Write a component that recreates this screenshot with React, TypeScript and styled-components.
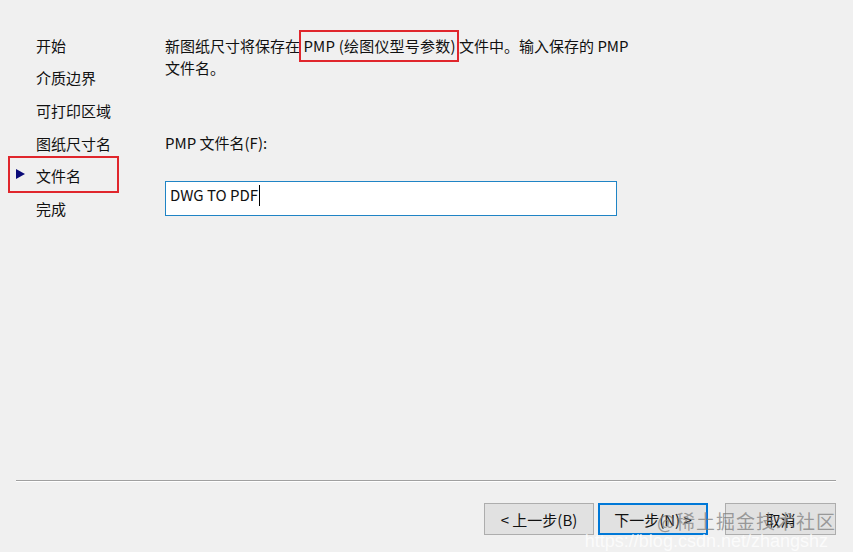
import styled, { createGlobalStyle } from "styled-components";

const GlobalStyle = createGlobalStyle`
  html, body {
    margin: 0;
    padding: 0;
    background: #f0f0f0;
  }
  body {
    font-family: "Noto Sans CJK SC", "Liberation Sans", sans-serif;
    color: #000;
  }
`;

const steps = ["开始", "介质边界", "可打印区域", "图纸尺寸名", "文件名", "完成"];
const activeStep = "文件名";

const App = () => {
  return (
    <>
      <GlobalStyle />
      <Window>
        <Body>
          <Sidebar>
            {steps.map((step) => (
              <StepItem key={step} $active={step === activeStep}>
                {step === activeStep && (
                  <Arrow width="9" height="10" viewBox="0 0 9 10">
                    <polygon points="0,0 9,5 0,10" fill="#0a0a78" />
                  </Arrow>
                )}
                {step}
              </StepItem>
            ))}
          </Sidebar>
          <Main>
            <Intro>
              新图纸尺寸将保存在 <Marked>PMP (绘图仪型号参数)</Marked> 文件中。输入保存的 PMP
              <br />
              文件名。
            </Intro>
            <FieldLabel>PMP 文件名(F):</FieldLabel>
            <Field>
              DWG TO PDF
              <Caret />
            </Field>
          </Main>
        </Body>
        <Footer>
          <Separator />
          <ButtonRow>
            <Button>&lt; 上一步(B)</Button>
            <Button $primary>下一步(N) &gt;</Button>
            <Button $gap>取消</Button>
            <Watermark>@稀土掘金技术社区</Watermark>
            <UrlMark>https://blog.csdn.net/zhangshz</UrlMark>
          </ButtonRow>
        </Footer>
      </Window>
    </>
  );
};

const Window = styled.div`
  width: 853px;
  height: 552px;
  display: flex;
  flex-direction: column;
  background: #f0f0f0;
  overflow: hidden;
`;

const Body = styled.div`
  flex: 1;
  display: flex;
`;

const Sidebar = styled.div`
  width: 157px;
  padding: 29px 0 0 8px;
  display: flex;
  flex-direction: column;
`;

const StepItem = styled.div<{ $active?: boolean }>`
  position: relative;
  width: 111px;
  box-sizing: border-box;
  height: 32.6px;
  padding-left: 28px;
  display: flex;
  align-items: center;
  font-size: 15px;
  color: #111;

  &::after {
    content: "";
    display: ${(p) => (p.$active ? "block" : "none")};
    position: absolute;
    top: -3px;
    bottom: -1px;
    left: 0;
    right: 0;
    border: 2px solid #e0262c;
  }
`;

const Arrow = styled.svg`
  position: absolute;
  left: 8px;
  top: 10px;
`;

const Main = styled.div`
  flex: 1;
  padding-top: 35px;
  display: flex;
  flex-direction: column;
`;

const Intro = styled.div`
  font-size: 15px;
  line-height: 22px;
  color: #111;
`;

const Marked = styled.span`
  position: relative;
  letter-spacing: 0.2px;

  &::after {
    content: "";
    position: absolute;
    top: -5px;
    bottom: -6px;
    left: -4px;
    right: -3px;
    border: 2px solid #e0262c;
  }
`;

const FieldLabel = styled.div`
  margin-top: 53px;
  font-size: 15px;
  line-height: 22px;
  color: #111;
`;

const Field = styled.div`
  margin-top: 27px;
  width: 452px;
  height: 35px;
  box-sizing: border-box;
  border: 1px solid #1f84c5;
  background: #fff;
  padding: 3px 0 0 4px;
  display: flex;
  align-items: flex-start;
  font-size: 15px;
  line-height: 20px;
  color: #111;
`;

const Caret = styled.span`
  display: inline-block;
  width: 1px;
  height: 21px;
  margin-left: 1px;
  background: #000;
`;

const Footer = styled.div`
  height: 72px;
  display: flex;
  flex-direction: column;
  padding: 0 17px 0 16px;
`;

const Separator = styled.div`
  height: 1px;
  background: #a0a0a0;
  border-bottom: 1px solid #ffffff;
`;

const ButtonRow = styled.div`
  position: relative;
  margin-top: 21px;
  display: flex;
  justify-content: flex-end;
  gap: 4px;
`;

const Button = styled.button<{ $primary?: boolean; $gap?: boolean }>`
  width: ${(p) => (p.$gap ? "111px" : "110px")};
  height: 32px;
  margin-left: ${(p) => (p.$gap ? "13px" : "0")};
  box-sizing: border-box;
  background: #e1e1e1;
  border: ${(p) => (p.$primary ? "2px solid #0078d7" : "1px solid #adadad")};
  font-family: "Noto Sans CJK SC", "Liberation Sans", sans-serif;
  font-size: 15px;
  color: #111;
  padding: 0;
`;

const Watermark = styled.div`
  position: absolute;
  right: 0;
  top: 4px;
  font-size: 19px;
  letter-spacing: 1px;
  color: rgba(120, 120, 120, 0.7);
  pointer-events: none;
`;

const UrlMark = styled.div`
  position: absolute;
  right: 8px;
  top: 28px;
  font-family: "Liberation Sans", sans-serif;
  font-size: 18px;
  color: rgba(255, 255, 255, 0.75);
  pointer-events: none;
`;

export default App;
